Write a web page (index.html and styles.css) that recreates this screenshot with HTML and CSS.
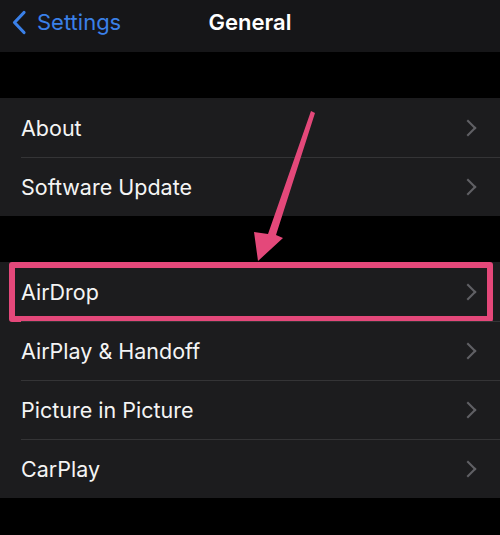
FILE: index.html
```html
<!DOCTYPE html>
<html lang="en">
<head>
<meta charset="UTF-8">
<meta name="viewport" content="width=device-width, initial-scale=1.0">
<title>General</title>
<link rel="stylesheet" href="styles.css">
</head>

<body>
<div class="navbar">
    <a class="back" href="#">
        <svg class="back_icon" width="16" height="25" viewBox="0 0 16 25">
            <path d="M13 2.5 L3.5 12.5 L13 22.5" fill="none" stroke="#3a80e8" stroke-width="3.2" stroke-linecap="round" stroke-linejoin="round"/>
        </svg>
        <span>Settings</span>
    </a>
    <h1 class="title">General</h1>
</div>

<ul class="group">
    <li class="row"><span class="label">About</span><span class="chevron"></span></li>
    <li class="row"><span class="label">Software Update</span><span class="chevron"></span></li>
</ul>

<ul class="group">
    <li class="row marked"><span class="label">AirDrop</span><span class="chevron"></span></li>
    <li class="row"><span class="label">AirPlay &amp; Handoff</span><span class="chevron"></span></li>
    <li class="row"><span class="label">Picture in Picture</span><span class="chevron"></span></li>
    <li class="row"><span class="label">CarPlay</span><span class="chevron"></span></li>
</ul>

<!-- annotation arrow pointing at AirDrop -->
<svg class="arrow" width="500" height="535" viewBox="0 0 500 535">
    <polygon points="311,111 315,113 276,235 283,238 258,261 254,232 268,234" fill="#e4487a"/>
</svg>
</body>
</html>
```

FILE: styles.css
```css
body {
    margin: 0;
    background-color: #000000;
    font-family: Inter, "Liberation Sans", sans-serif;
    color: #f4f4f4;
    position: relative;
    height: 535px;
    overflow: hidden;
}
.navbar {
    height: 52px;
    box-sizing: border-box;
    padding-bottom: 9px;
    background-color: #161618;
    display: flex;
    align-items: center;
    justify-content: center;
    position: relative;
}
.back {
    position: absolute;
    left: 11px;
    top: 9px;
    display: flex;
    align-items: center;
    gap: 10px;
    color: #3a80e8;
    text-decoration: none;
    font-size: 22px;
}
.back_icon {
    display: block;
}
.title {
    margin: 0;
    font-size: 22px;
    font-weight: 600;
    color: #ffffff;
}
.group {
    list-style: none;
    margin: 46px 0 0 0;
    padding: 0;
    background-color: #1c1c1e;
}
.row {
    height: 59px;
    display: flex;
    align-items: center;
    justify-content: space-between;
    padding: 0 24px 0 21px;
    font-size: 21.5px;
    position: relative;
}
.row + .row::before {
    content: "";
    position: absolute;
    top: 0;
    left: 21px;
    right: 0;
    height: 1px;
    background-color: #343436;
}
.chevron {
    width: 10px;
    height: 10px;
    border-top: 2.2px solid #606065;
    border-right: 2.2px solid #606065;
    transform: translateX(-2px) rotate(45deg);
}
.marked::after {
    content: "";
    position: absolute;
    left: 9px;
    right: 7px;
    top: 0;
    bottom: -1px;
    border: 6.5px solid #e4487a;
    border-radius: 3px;
}
.arrow {
    position: absolute;
    left: 0;
    top: 0;
    pointer-events: none;
}
```
